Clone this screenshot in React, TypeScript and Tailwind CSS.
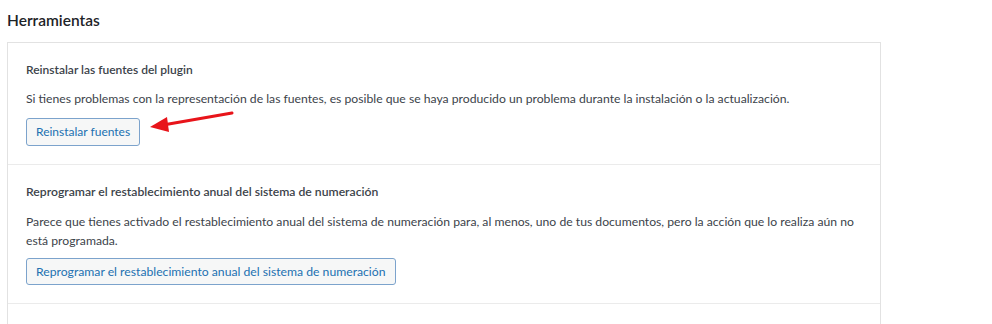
export default function App() {
  return (
    <div className="relative h-[324px] w-[992px] overflow-hidden bg-white pl-[7px] pt-[11px] text-[12.2px] text-[#3c434a]" style={{ fontFamily: 'Lato, "Noto Sans", sans-serif' }}>
      <h2 className="mb-[13px] text-[15.5px] font-semibold leading-[18px] text-[#1d2327]">Herramientas</h2>
      <div className="w-[874px] border border-[#e2e2e2] bg-white">
        <div className="border-b border-[#ebebeb] px-[18px] pt-[19px] pb-[18px]">
          <h3 className="text-[12px] font-semibold leading-[16px] text-[#3c434a]">Reinstalar las fuentes del plugin</h3>
          <p className="mt-[12px] leading-[18px]">Si tienes problemas con la representación de las fuentes, es posible que se haya producido un problema durante la instalación o la actualización.</p>
          <button className="mt-[10px] h-[28px] rounded-[3px] border border-[#7ca3cc] bg-[#f6f7f7] px-[9px] text-[12px] leading-[26px] text-[#2271b1]">Reinstalar fuentes</button>
        </div>
        <div className="border-b border-[#ebebeb] px-[18px] pt-[19px] pb-[18px]">
          <h3 className="text-[12.2px] font-semibold leading-[16px] text-[#3c434a]">Reprogramar el restablecimiento anual del sistema de numeración</h3>
          <p className="mt-[12px] leading-[19px]">Parece que tienes activado el restablecimiento anual del sistema de numeración para, al menos, uno de tus documentos, pero la acción que lo realiza aún no está programada.</p>
          <button className="mt-[8px] h-[27px] rounded-[3px] border border-[#7ca3cc] bg-[#f6f7f7] px-[9px] text-[12.2px] leading-[25px] text-[#2271b1]">Reprogramar el restablecimiento anual del sistema de numeración</button>
        </div>
        <div className="h-[40px]" />
      </div>
      <svg className="absolute left-[145px] top-[108px]" width="95" height="28" viewBox="0 0 95 28">
        <line x1="87" y1="5" x2="18" y2="17" stroke="#e8141a" strokeWidth="3" strokeLinecap="round" />
        <polygon points="5,19 22,9 24,24" fill="#e8141a" />
      </svg>
    </div>
  )
}
